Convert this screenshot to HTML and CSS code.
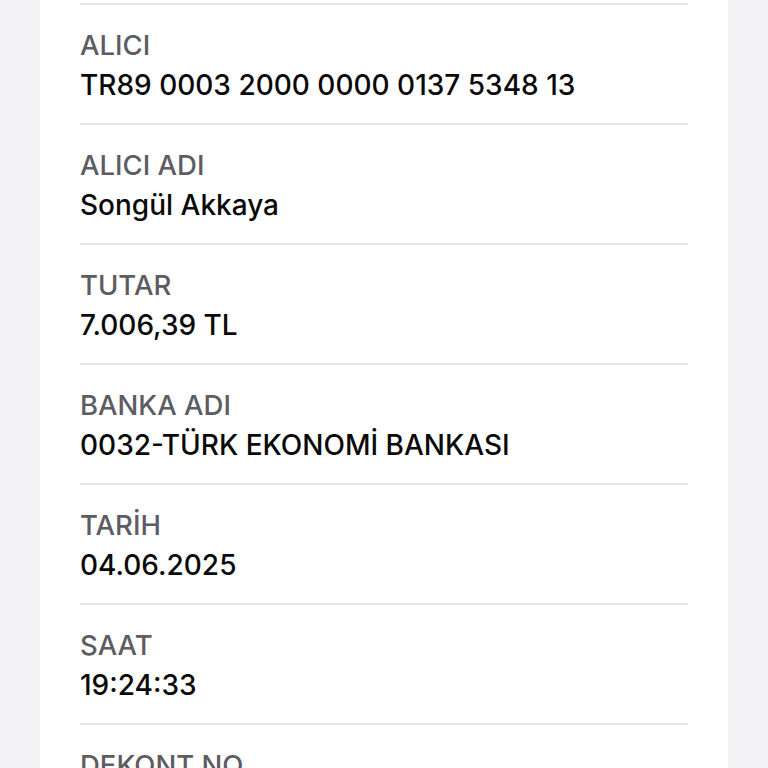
FILE: index.html
```html
<!DOCTYPE html>
<html lang="tr">
<head>
<meta charset="utf-8">
<link rel="stylesheet" href="styles.css">
</head>
<body>
<div class="card">
  <div class="row"><div class="label">ALICI</div><div class="value">TR89 0003 2000 0000 0137 5348 13</div></div>
  <div class="row"><div class="label">ALICI ADI</div><div class="value">Songül Akkaya</div></div>
  <div class="row"><div class="label">TUTAR</div><div class="value">7.006,39 TL</div></div>
  <div class="row"><div class="label">BANKA ADI</div><div class="value">0032-TÜRK EKONOMİ BANKASI</div></div>
  <div class="row"><div class="label">TARİH</div><div class="value">04.06.2025</div></div>
  <div class="row"><div class="label">SAAT</div><div class="value">19:24:33</div></div>
  <div class="row"><div class="label">DEKONT NO</div><div class="value">&nbsp;</div></div>
</div>
</body>
</html>
```
FILE: styles.css
```css
html, body {
  margin: 0;
  padding: 0;
  background: #f4f4f6;
  height: 768px;
  overflow: hidden;
}
body {
  font-family: "Inter", "Liberation Sans", sans-serif;
}
.card {
  margin-left: 40px;
  width: 608px;
  padding: 3px 40px 0;
  background: #fff;
  min-height: 765px;
}
.row {
  border-top: 2px solid #e6e6e8;
  padding: 20px 0 18px;
}
.label {
  font-size: 27.5px;
  line-height: 40px;
  font-weight: 500;
  color: #5c5c62;
}
.value {
  font-size: 28px;
  line-height: 40px;
  font-weight: 500;
  color: #0a0a0a;
}
```
